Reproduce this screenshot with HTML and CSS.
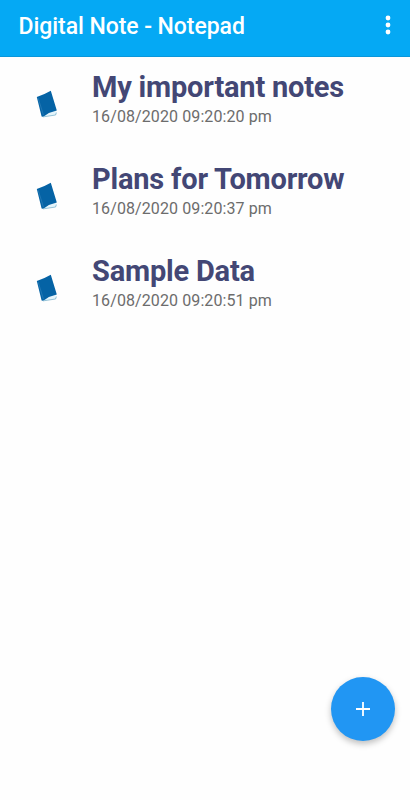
FILE: index.html
```html
<!DOCTYPE html>
<html lang="en">
<head>
  <meta charset="UTF-8">
  <meta name="viewport" content="width=device-width, initial-scale=1.0">
  <title>Digital Note - Notepad</title>
  <link rel="stylesheet" href="styles.css">
</head>
<body>
  <!-- Book icon shared by the notes -->
  <svg class="hidden">
    <symbol id="book" viewBox="0 0 22 29">
      <path d="M7 25.5 L19.5 21 L20.6 22.6 L19.8 25 L7 27 Z" fill="#e3f4fb"/>
      <path d="M0.8 6.9 Q8 4.8 14.8 0.8 L20.8 20.6 Q14 22.2 9.2 25.4 L7 26.8 L5.6 26.4 Z" fill="#0563a5"/>
      <path d="M2.2 8.2 L7.4 25" fill="none" stroke="#4e95c8" stroke-width="0.4"/>
      <path d="M7 26.9 L19.6 25 L20.4 22.6" fill="none" stroke="#5b9fbf" stroke-width="0.6"/>
    </symbol>
  </svg>

  <header class="toolbar">
    <h1>Digital Note - Notepad</h1>
    <button class="menu" aria-label="More">
      <svg width="6" height="20" viewBox="0 0 6 20" fill="#fff">
        <circle cx="3" cy="3" r="2.4"/>
        <circle cx="3" cy="10" r="2.4"/>
        <circle cx="3" cy="17" r="2.4"/>
      </svg>
    </button>
  </header>

  <main class="notes">
    <article class="note">
      <svg class="book"><use href="#book"/></svg>
      <div class="info">
        <h2>My important notes</h2>
        <p>16/08/2020 09:20:20 pm</p>
      </div>
    </article>
    <article class="note">
      <svg class="book"><use href="#book"/></svg>
      <div class="info">
        <h2>Plans for Tomorrow</h2>
        <p>16/08/2020 09:20:37 pm</p>
      </div>
    </article>
    <article class="note">
      <svg class="book"><use href="#book"/></svg>
      <div class="info">
        <h2>Sample Data</h2>
        <p>16/08/2020 09:20:51 pm</p>
      </div>
    </article>
  </main>

  <!-- Add note button -->
  <button class="add" aria-label="Add note">
    <svg width="14" height="14" viewBox="0 0 14 14" stroke="#fff" stroke-width="1.8">
      <path d="M7 0 V14 M0 7 H14"/>
    </svg>
  </button>
</body>
</html>
```

FILE: styles.css
```css
* {
  box-sizing: border-box;
}

body {
  font-family: Roboto, sans-serif;
  background-color: #fefefe;
  margin: 0;
  height: 100vh;
  overflow: hidden;
}

h1, h2, p {
  margin: 0;
  white-space: nowrap;
}

button {
  border: none;
  padding: 0;
  cursor: pointer;
}

.hidden {
  display: none;
}

/* Top bar */
.toolbar {
  display: flex;
  justify-content: space-between;
  align-items: flex-start;
  height: 57px;
  padding: 13px 19px 0 18.5px;
  background-color: #05a9f4;
  border-bottom: 1px solid #0a97da;
}

.toolbar h1 {
  font-size: 23px;
  font-weight: 500;
  line-height: 28px;
  letter-spacing: -0.06px;
  color: #fff;
}

.menu {
  display: flex;
  margin-top: 2px;
  background: none;
}

/* Notes list */
.note {
  display: flex;
  height: 92px;
  padding: 13px 0 0 36px;
}

.book {
  width: 22px;
  height: 29px;
  margin-top: 20px;
}

.info {
  margin-left: 34px;
}

.info h2 {
  font-size: 29px;
  font-weight: 700;
  line-height: 34px;
  letter-spacing: -0.2px;
  color: #434775;
}

.info p {
  margin-top: 3px;
  font-size: 16px;
  line-height: 20px;
  letter-spacing: 0.1px;
  color: #6c6c6c;
}

/* Floating button */
.add {
  position: fixed;
  right: 15.5px;
  bottom: 59.5px;
  display: flex;
  justify-content: center;
  align-items: center;
  width: 64px;
  height: 64px;
  border-radius: 50%;
  background-color: #2196f3;
  box-shadow: 0 3px 6px rgba(0, 0, 0, 0.25);
}
```
